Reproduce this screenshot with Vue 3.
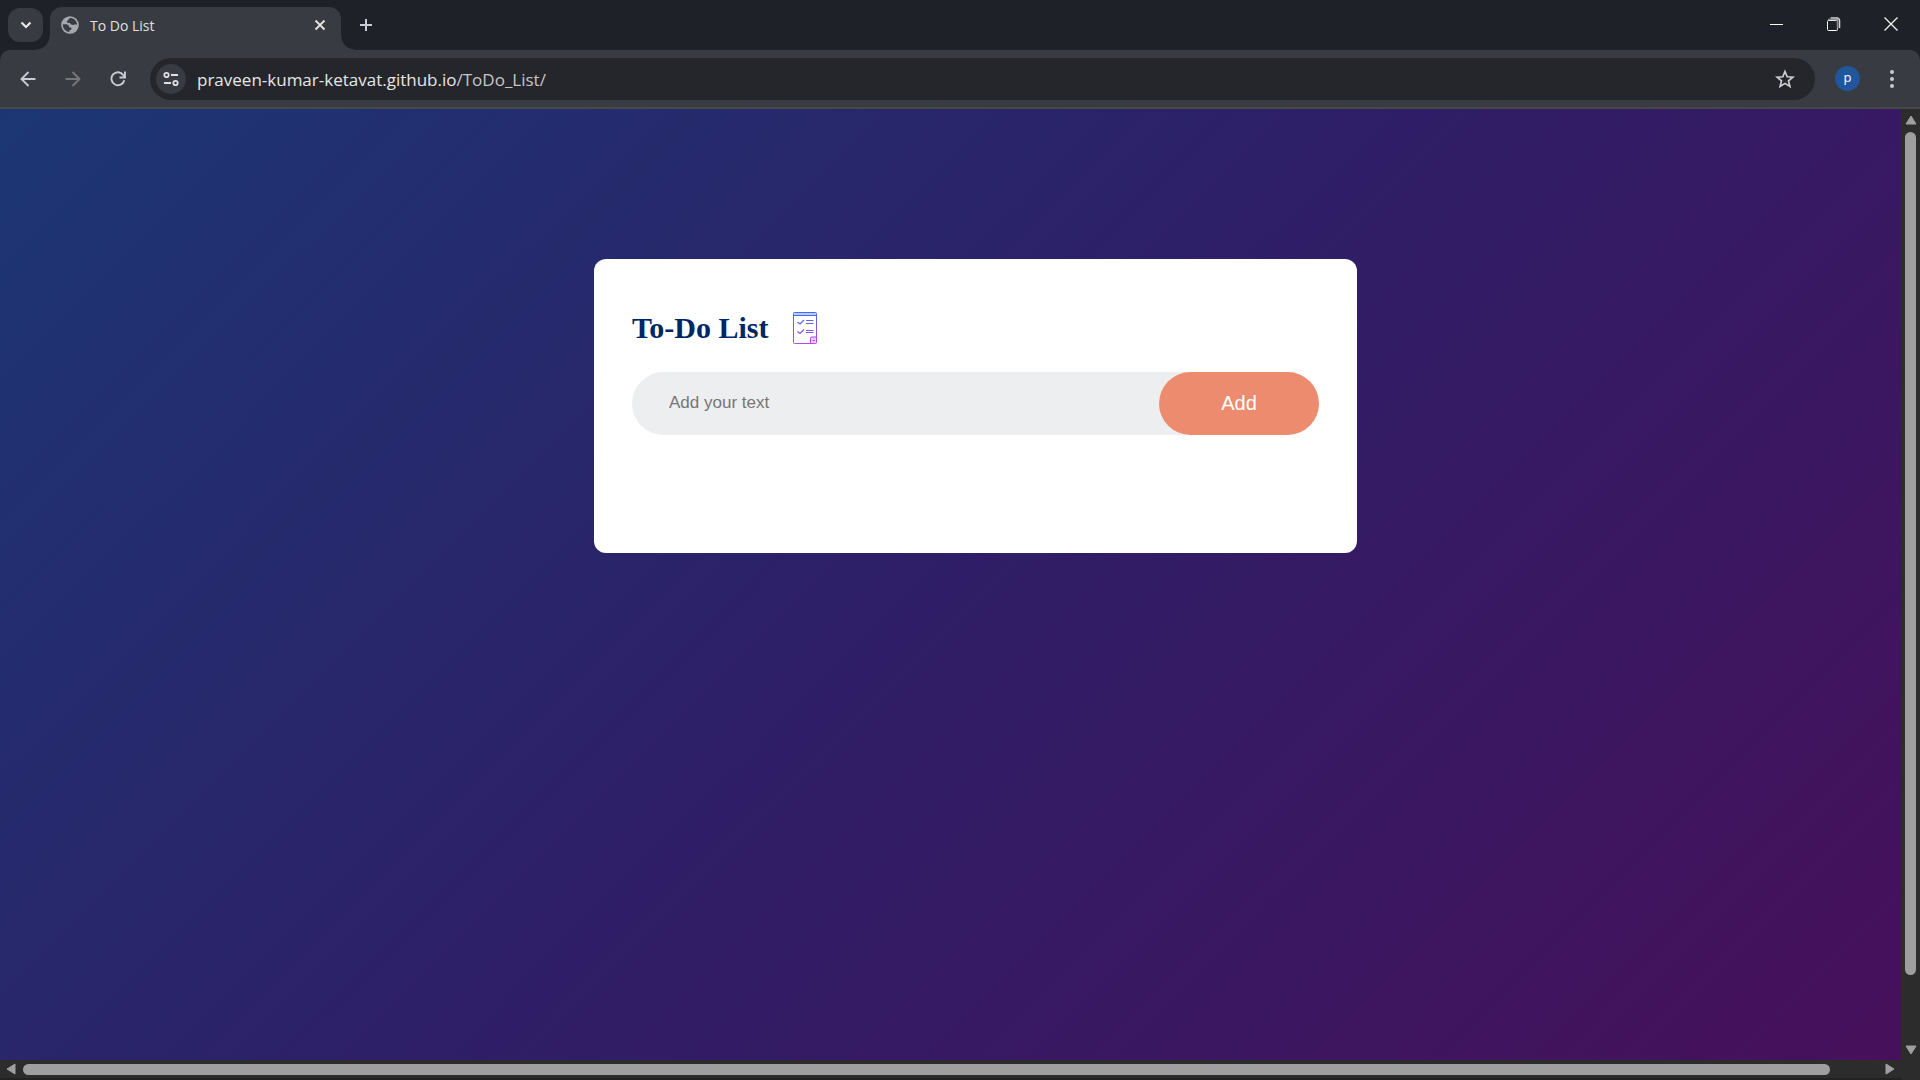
<script setup>
import { ref } from 'vue'

const task = ref('')
const tasks = ref([])

function addTask() {
  const text = task.value.trim()
  if (text) tasks.value.push(text)
  task.value = ''
}
</script>

<template>
  <div class="browser">
    <header class="tab-strip">
      <button class="tab-search" type="button" aria-label="Search tabs">
        <svg width="12" height="8" viewBox="0 0 12 8"><path d="M1.500 1.500 6 6l4.500-4.500" fill="none" stroke="#e6e6e6" stroke-width="2.200" /></svg>
      </button>
      <div class="tab">
        <svg width="18" height="18" viewBox="0 0 18 18">
          <circle cx="9" cy="9" r="8.800" fill="#a5a8ad" />
          <path d="M9.800 1.900c-1.500.2-2.500 1.300-2.300 2.400-1.300-.2-2 .7-1.600 1.700.3.900 1.600.6 2.400.8 1 .2.800 1.500 1.900 1.700 1 .2 1.500.8 2.500.3.900-.4 1.900-.2 3.400-.2C15.800 5 13.400 2.300 9.800 1.900ZM1.900 8.300c-.3 4.200 2.700 7.400 6.400 7.800v-1.800c1.500.2 2.300-.5 2.200-1.700-.1-1.300-1.400-1.400-2.300-1.400-.3-2.100-1.500-2.900-3.200-2.900Z" fill="#393b43" />
        </svg>
        <span class="tab-title">To Do List</span>
        <button class="tab-close" type="button" aria-label="Close tab">
          <svg width="12" height="12" viewBox="0 0 12 12"><path d="m1.500 1.500 9 9m0-9-9 9" fill="none" stroke="#e6e6e0" stroke-width="1.800" /></svg>
        </button>
      </div>
      <button class="new-tab" type="button" aria-label="New tab">
        <svg width="14" height="14" viewBox="0 0 14 14"><path d="M7 1v12M1 7h12" fill="none" stroke="#c9cbd6" stroke-width="2" /></svg>
      </button>
      <div class="window-controls">
        <button type="button" aria-label="Minimize">
          <svg width="13" height="13" viewBox="0 0 13 13"><path d="M0 6.500h13" stroke="#fff" /></svg>
        </button>
        <button type="button" aria-label="Restore">
          <svg width="14" height="14" viewBox="0 0 14 14" fill="none">
            <path d="M3.500 1h6.500a2.500 2.500 0 0 1 2.500 2.500V11" stroke="#d5d5d8" stroke-width="1.500" />
            <rect x=".5" y="3.500" width="10" height="10" rx="1" stroke="#fff" />
            <path d="M1 2.500h9.500v9" stroke="#8d8e94" stroke-width="1.500" />
          </svg>
        </button>
        <button type="button" aria-label="Close window">
          <svg width="14" height="14" viewBox="0 0 14 14"><path d="m.5.5 13 13m0-13-13 13" fill="none" stroke="#f3f3ee" stroke-width="1.300" /></svg>
        </button>
      </div>
    </header>

    <nav class="toolbar-back">
      <div class="toolbar">
        <button class="nav-button" type="button" aria-label="Back">
          <svg width="16" height="16" viewBox="0 0 16 16"><path d="M15.500 8H2M8.500 1 1.500 8l7 7" fill="none" stroke="#c7c9d3" stroke-width="1.900" /></svg>
        </button>
        <button class="nav-button" type="button" aria-label="Forward" disabled>
          <svg width="16" height="16" viewBox="0 0 16 16"><path d="M.5 8H14M7.500 1l7 7-7 7" fill="none" stroke="#77777a" stroke-width="1.900" /></svg>
        </button>
        <button class="nav-button" type="button" aria-label="Reload">
          <svg width="16" height="16" viewBox="0 0 16 16"><path d="M14.300 9.200A6.500 6.500 0 1 1 13.300 4L14.500 6M15 .5v6H9.500" fill="none" stroke="#c7c9d3" stroke-width="1.900" /></svg>
        </button>
        <div class="omnibox">
          <button class="site-info" type="button" aria-label="View site information">
            <svg width="16" height="16" viewBox="0 0 16 16" fill="none" stroke="#dfdfe1" stroke-width="1.800">
              <circle cx="3.500" cy="4" r="2.200" /><path d="M8 4h7M1 12h7" /><circle cx="12.500" cy="12" r="2.200" />
            </svg>
          </button>
          <span class="url">praveen-kumar-ketavat.github.io<span class="url-path">/ToDo_List/</span></span>
          <button class="bookmark" type="button" aria-label="Bookmark this tab">
            <svg width="20" height="20" viewBox="0 0 20 20"><path d="m10 2.500 2.200 5.300 5.700.4-4.400 3.700 1.400 5.500L10 14.400l-4.900 3 1.400-5.500-4.400-3.700 5.700-.4Z" fill="none" stroke="#cfcfd3" stroke-width="1.700" /></svg>
          </button>
        </div>
        <button class="avatar" type="button" aria-label="Profile">p</button>
        <button class="menu" type="button" aria-label="Menu">
          <svg width="4" height="18" viewBox="0 0 4 18" fill="#c7c9d3"><circle cx="2" cy="2" r="2" /><circle cx="2" cy="9" r="2" /><circle cx="2" cy="16" r="2" /></svg>
        </button>
      </div>
    </nav>

    <div class="viewport">
      <main class="page">
        <section class="todo">
          <h1>
            To-Do List
            <svg width="24" height="32" viewBox="0 0 24 32" fill="none">
              <defs>
                <linearGradient id="ink" x1="0" y1="0" x2="0" y2="32" gradientUnits="userSpaceOnUse">
                  <stop offset="0" stop-color="#3c6df2" /><stop offset=".55" stop-color="#7d55f5" /><stop offset="1" stop-color="#bd43f5" />
                </linearGradient>
              </defs>
              <rect x="1" y="1" width="22" height="2" fill="#b5d0fb" />
              <path d="M17 30v-3.500a1.500 1.500 0 0 1 1.500-1.500H23v6h-6Z" fill="#ecd0fc" />
              <g stroke="url(#ink)">
                <path d="M1.500.5h21a1 1 0 0 1 1 1v29a1 1 0 0 1-1 1h-21a1 1 0 0 1-1-1v-29a1 1 0 0 1 1-1ZM1 3.500h22M17.500 31v-4.500a1.500 1.500 0 0 1 1.500-1.500h4" />
                <path d="m4.500 10 2.500 2 4-4M4.500 19.500l2.500 2 4-4" stroke-width="1.300" />
                <path d="M13 8.500h7.500M13 11.500h7.500M13 18.500h7.500M13 20.500h7.500M19.500 28.500H22" />
              </g>
            </svg>
          </h1>
          <form class="entry" @submit.prevent="addTask">
            <input v-model="task" type="text" placeholder="Add your text" aria-label="New task">
            <button type="submit">Add</button>
          </form>
          <ul class="tasks">
            <li v-for="(item, i) in tasks" :key="i">{{ item }}</li>
          </ul>
        </section>
      </main>
      <div class="bar vertical">
        <svg width="12" height="10" viewBox="0 0 12 10"><path d="M6 1 11 9H1Z" /></svg>
        <div class="track"><div class="thumb"></div></div>
        <svg width="12" height="10" viewBox="0 0 12 10"><path d="M1 1h10L6 9Z" /></svg>
      </div>
      <div class="bar horizontal">
        <svg width="10" height="12" viewBox="0 0 10 12"><path d="M9 1v10L1 6Z" /></svg>
        <div class="track"><div class="thumb"></div></div>
        <svg width="10" height="12" viewBox="0 0 10 12"><path d="M1 1v10l8-5Z" /></svg>
      </div>
    </div>
  </div>
</template>

<style>
body {
  margin: 0;
  overflow: hidden;
}
</style>

<style scoped>
.browser {
  display: flex;
  flex-direction: column;
  height: 100vh;
  font-family: "Open Sans", "Noto Sans", sans-serif;
}

button {
  display: flex;
  align-items: center;
  justify-content: center;
  padding: 0;
  border: 0;
  background: none;
  color: inherit;
  font: inherit;
}

svg {
  flex: none;
}

.tab-strip {
  display: flex;
  flex: none;
  height: 50px;
  background: #1f2129;
}

.tab-search {
  width: 35px;
  height: 34px;
  margin: 8px 7px 0 8px;
  border-radius: 12px;
  background: #393b43;
}

.tab {
  position: relative;
  display: flex;
  align-items: center;
  box-sizing: border-box;
  width: 291px;
  height: 43px;
  margin-top: 7px;
  padding: 0 15px 7px 11px;
  border-radius: 12px 12px 0 0;
  background: #393b43;
}

.tab::before,
.tab::after {
  content: "";
  position: absolute;
  bottom: 0;
  width: 14px;
  height: 14px;
}

.tab::before {
  right: 100%;
  background: radial-gradient(circle at 0 0, transparent 13px, #393b43 14px);
}

.tab::after {
  left: 100%;
  background: radial-gradient(circle at 100% 0, transparent 13px, #393b43 14px);
}

.tab-title {
  flex: 1;
  margin-left: 11px;
  color: #e0e0e0;
  font-size: 14px;
}

.new-tab {
  width: 34px;
  height: 34px;
  margin: 8px 0 0 8px;
}

.window-controls {
  display: flex;
  margin: 0 1px 0 auto;
}

.window-controls button {
  width: 57px;
  height: 48px;
}

.toolbar-back {
  flex: none;
  background: #1f2129;
}

.toolbar {
  display: flex;
  align-items: center;
  box-sizing: border-box;
  height: 59px;
  padding-left: 10px;
  border-bottom: 2px solid #484849;
  border-radius: 10px 10px 0 0;
  background: #393b43;
}

.nav-button {
  width: 36px;
  height: 36px;
  margin-right: 9px;
}

.omnibox {
  display: flex;
  flex: 1;
  align-items: center;
  box-sizing: border-box;
  height: 42px;
  margin: 1px 20px 0 5px;
  padding: 0 20px 0 6px;
  border-radius: 21px;
  background: #25262b;
}

.site-info {
  width: 30px;
  height: 30px;
  border-radius: 50%;
  background: #393b43;
}

.url {
  flex: 1;
  margin-left: 11px;
  color: #e6e6e6;
  font-size: 17px;
}

.url-path {
  color: #c5c5c7;
}

.avatar {
  width: 25px;
  height: 25px;
  padding-bottom: 3px;
  border-radius: 50%;
  background: #23559b;
  color: #fff;
  font-size: 13px;
}

.menu {
  width: 36px;
  height: 36px;
  margin: 0 10px 0 14px;
}

.viewport {
  display: grid;
  flex: 1;
  grid-template-rows: minmax(0, 1fr) 20px;
  grid-template-columns: minmax(0, 1fr) 19px;
  min-height: 0;
  overflow: hidden;
  background: #2c2c2c;
}

.page {
  overflow: hidden;
  padding: 150px 0 0 50px;
  background: linear-gradient(135deg, #1c3674, #2f1e67 48%, #4a0f5a) 0 0 / calc(100% + 50px) calc(100% + 74px) no-repeat;
}

.todo {
  box-sizing: border-box;
  width: 100%;
  max-width: 763px;
  margin: 0 auto;
  padding: 50px 38px 88px;
  border-radius: 12px;
  background: #fff;
}

h1 {
  display: flex;
  align-items: center;
  gap: 25px;
  height: 38px;
  margin: 0 0 25px;
  color: #002765;
  font: bold 30px "Liberation Serif", serif;
}

.entry {
  display: flex;
  height: 63px;
  border-radius: 32px;
  background: #edeef0;
}

.entry input {
  flex: 1;
  min-width: 0;
  padding: 0 0 1px 37px;
  border: 0;
  outline: 0;
  background: transparent;
  color: #222;
  font: 17px "Liberation Sans", sans-serif;
}

.entry input::placeholder {
  color: #757575;
}

.entry button {
  width: 160px;
  border-radius: 32px;
  background: #ed8b6f;
  color: #fff;
  font: 20px "Liberation Sans", sans-serif;
}

.tasks {
  min-height: 30px;
  margin: 0;
  padding: 0;
  list-style: none;
  font: 18px "Liberation Sans", sans-serif;
}

.bar {
  display: flex;
  align-items: center;
  gap: 7px;
  box-sizing: border-box;
  fill: #9f9f9f;
}

.bar path {
  stroke: #9f9f9f;
  stroke-linejoin: round;
}

.vertical {
  flex-direction: column;
  padding: 6px 0 5px;
}

.horizontal {
  padding: 0 6px;
  border-bottom: 2px solid #222;
}

.track {
  display: grid;
  flex: 1;
}

.vertical .track {
  grid-template-rows: 93fr 7fr;
}

.horizontal .track {
  grid-template-columns: 974fr 26fr;
}

.thumb {
  border-radius: 6px;
  background: #9f9f9f;
}

.vertical .thumb {
  width: 11px;
}

.horizontal .thumb {
  height: 11px;
}
</style>
